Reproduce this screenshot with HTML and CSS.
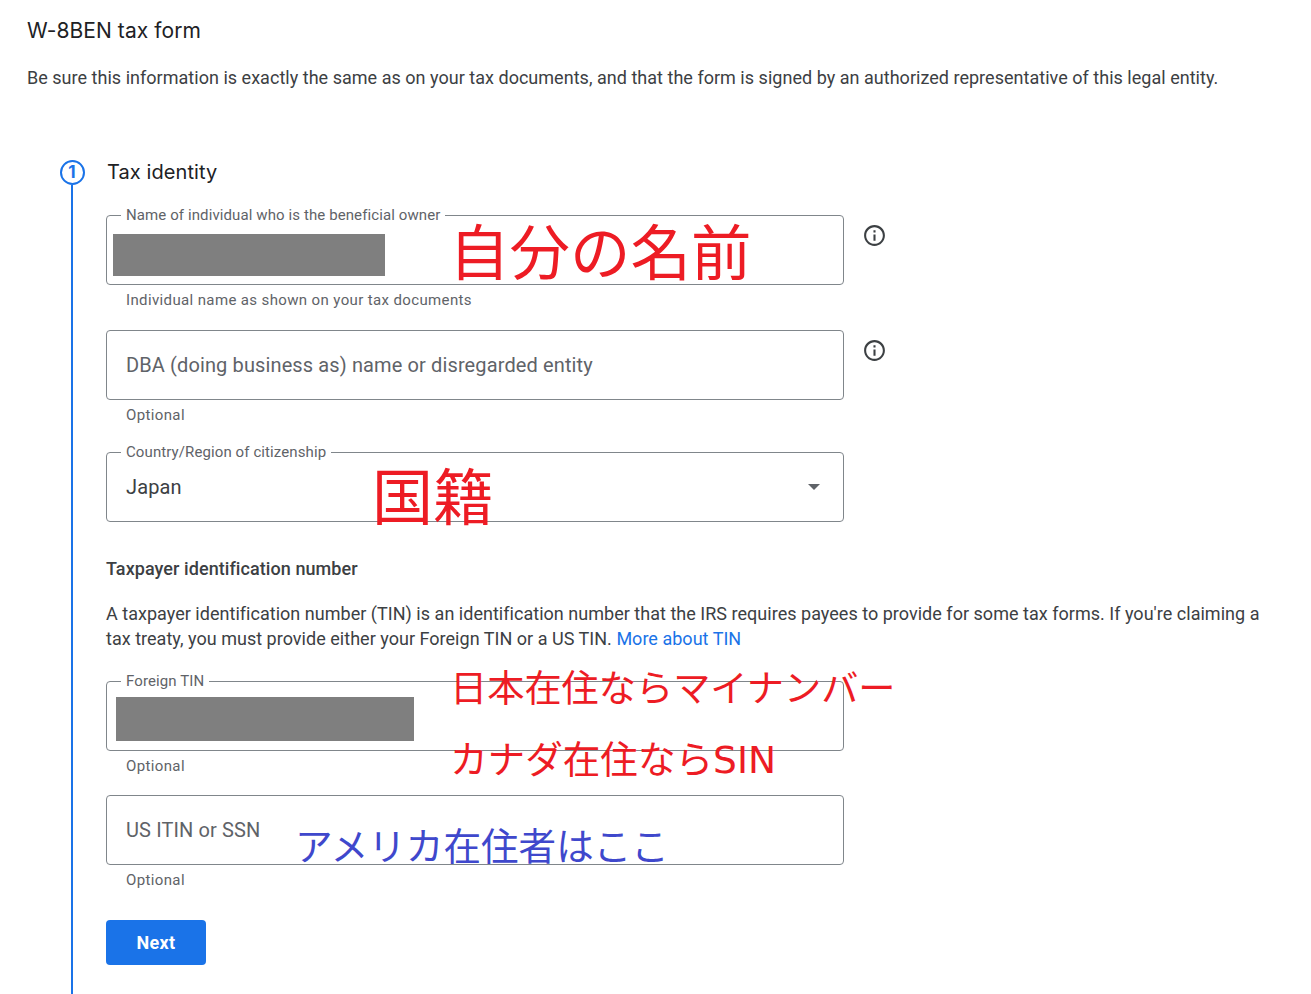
FILE: index.html
```html
<!DOCTYPE html>
<html lang="en">
<head>
<meta charset="utf-8">
<title>W-8BEN tax form</title>
<link rel="stylesheet" href="styles.css">
</head>
<body>
<main class="page">
  <header class="intro">
    <h1 class="title">W-8BEN tax form</h1>
    <p class="desc">Be sure this information is exactly the same as on your tax documents, and that the form is signed by an authorized representative of this legal entity.</p>
  </header>
  <section class="stepper">
    <div class="rail">
      <div class="step-num">1</div>
      <div class="rail-line"></div>
    </div>
    <div class="step-body">
      <h2 class="step-title">Tax identity</h2>

      <div class="row row-first">
        <div class="field">
          <span class="float-label">Name of individual who is the beneficial owner</span>
          <span class="redact redact-name"></span>
          <span class="note note-name" lang="ja">自分の名前</span>
        </div>
        <svg class="info" viewBox="0 0 24 24"><path d="M11 7h2v2h-2zm0 4h2v6h-2zm1-9C6.48 2 2 6.48 2 12s4.48 10 10 10 10-4.48 10-10S17.52 2 12 2zm0 18c-4.41 0-8-3.59-8-8s3.59-8 8-8 8 3.59 8 8-3.59 8-8 8z"/></svg>
      </div>
      <p class="helper">Individual name as shown on your tax documents</p>

      <div class="row row-dba">
        <div class="field"><span class="placeholder">DBA (doing business as) name or disregarded entity</span></div>
        <svg class="info" viewBox="0 0 24 24"><path d="M11 7h2v2h-2zm0 4h2v6h-2zm1-9C6.48 2 2 6.48 2 12s4.48 10 10 10 10-4.48 10-10S17.52 2 12 2zm0 18c-4.41 0-8-3.59-8-8s3.59-8 8-8 8 3.59 8 8-3.59 8-8 8z"/></svg>
      </div>
      <p class="helper">Optional</p>

      <div class="row row-country">
        <div class="field field-select">
          <span class="float-label">Country/Region of citizenship</span>
          <span class="value">Japan</span>
          <span class="caret"></span>
          <span class="note note-country" lang="ja">国籍</span>
        </div>
      </div>

      <h3 class="sub">Taxpayer identification number</h3>
      <p class="para">A taxpayer identification number (TIN) is an identification number that the IRS requires payees to provide for some tax forms. If you're claiming a tax treaty, you must provide either your Foreign TIN or a US TIN. <a class="link" href="#">More about TIN</a></p>

      <div class="row row-tin">
        <div class="field">
          <span class="float-label">Foreign TIN</span>
          <span class="redact redact-tin"></span>
          <span class="note note-tin1" lang="ja">日本在住ならマイナンバー</span>
          <span class="note note-tin2" lang="ja">カナダ在住ならSIN</span>
        </div>
      </div>
      <p class="helper">Optional</p>

      <div class="row row-us">
        <div class="field">
          <span class="placeholder">US ITIN or SSN</span>
          <span class="note note-us" lang="ja">アメリカ在住者はここ</span>
        </div>
      </div>
      <p class="helper">Optional</p>

      <button class="next" type="button">Next</button>
    </div>
  </section>
</main>
</body>
</html>
```

FILE: styles.css
```css
* { box-sizing: border-box; }
html, body { margin: 0; height: 994px; overflow: hidden; background: #fff; }
body { font-family: Roboto, "Noto Sans", sans-serif; color: #3c4043; }
.page { display: flex; flex-direction: column; height: 994px; }
.intro { padding: 18px 27px 0; }
.title { margin: 0; font-family: Inter, Roboto, sans-serif; font-size: 21px; line-height: 26px; font-weight: 400; letter-spacing: .07px; color: #202124; }
.desc { margin: 22px 0 0; font-size: 18px; line-height: 24px; letter-spacing: .025px; color: #3c4043; }
.stepper { flex: 1; display: flex; margin-top: 70px; padding-left: 60px; }
.rail { width: 24px; display: flex; flex-direction: column; align-items: center; }
.step-num { width: 25px; height: 25px; flex: none; border: 2px solid #1a73e8; border-radius: 50%; color: #1a73e8; font-family: Inter, Roboto, sans-serif; font-size: 17px; font-weight: 700; line-height: 20px; text-align: center; }
.rail-line { flex: 1; width: 2px; background: #1a73e8; }
.step-body { margin-left: 22px; width: 1160px; }
.step-title { margin: 0; padding-left: 1px; font-family: Inter, Roboto, sans-serif; font-size: 20px; line-height: 24px; font-weight: 400; letter-spacing: .08px; color: #202124; }
.row { display: flex; align-items: flex-start; gap: 18px; }
.row-first { margin-top: 31px; }
.row-dba { margin-top: 22px; }
.row-country { margin-top: 29px; }
.row-tin { margin-top: 30px; }
.row-us { margin-top: 21px; }
.field { position: relative; width: 738px; height: 70px; flex: none; display: flex; align-items: center; padding: 0 19px; border: 1px solid #80868b; border-radius: 4px; }
.field-select { justify-content: space-between; }
.float-label { position: absolute; left: 14px; top: -9px; padding: 0 5px; background: #fff; font-size: 15px; line-height: 16px; color: #5f6368; letter-spacing: .1px; white-space: nowrap; }
.placeholder { font-size: 20px; letter-spacing: .12px; color: #5f6368; }
.value { font-size: 20px; letter-spacing: .12px; color: #3c4043; }
.caret { width: 0; height: 0; margin-right: 4px; border-left: 6px solid transparent; border-right: 6px solid transparent; border-top: 6px solid #5f6368; }
.info { width: 25px; height: 25px; margin-top: 8px; fill: #3c4043; flex: none; }
.helper { margin: 7px 0 0 20px; font-size: 15px; line-height: 16px; letter-spacing: .37px; color: #5f6368; }
.sub { margin: 35px 0 0; font-size: 18px; line-height: 24px; font-weight: 500; letter-spacing: .07px; color: #3c4043; }
.para { margin: 20px 0 0; font-size: 18px; line-height: 25px; letter-spacing: .025px; color: #3c4043; }
.link { color: #1a73e8; text-decoration: none; }
.next { display: block; width: 100px; height: 45px; margin-top: 32px; padding: 0; border: 0; border-radius: 4px; background: #1a73e8; color: #fff; font-family: inherit; font-size: 18px; font-weight: 700; letter-spacing: .3px; }
.redact { position: absolute; background: #7f7f7f; }
.redact-name { left: 6px; top: 18px; width: 272px; height: 42px; }
.redact-tin { left: 9px; top: 15px; width: 298px; height: 44px; }
.note { position: absolute; font-family: "DejaVu Sans", "Noto Sans CJK JP", sans-serif; white-space: nowrap; color: #ed1c24; line-height: 1; }
.note-name { left: 342px; top: 8px; font-size: 60.5px; }
.note-country { left: 265px; top: 15px; font-size: 61px; }
.note-tin1 { left: 343px; top: -11px; font-size: 37.2px; }
.note-tin2 { left: 343px; top: 60px; font-size: 37.6px; }
.note-us { left: 188px; top: 33px; font-size: 37.6px; color: #3f48cc; }
```
